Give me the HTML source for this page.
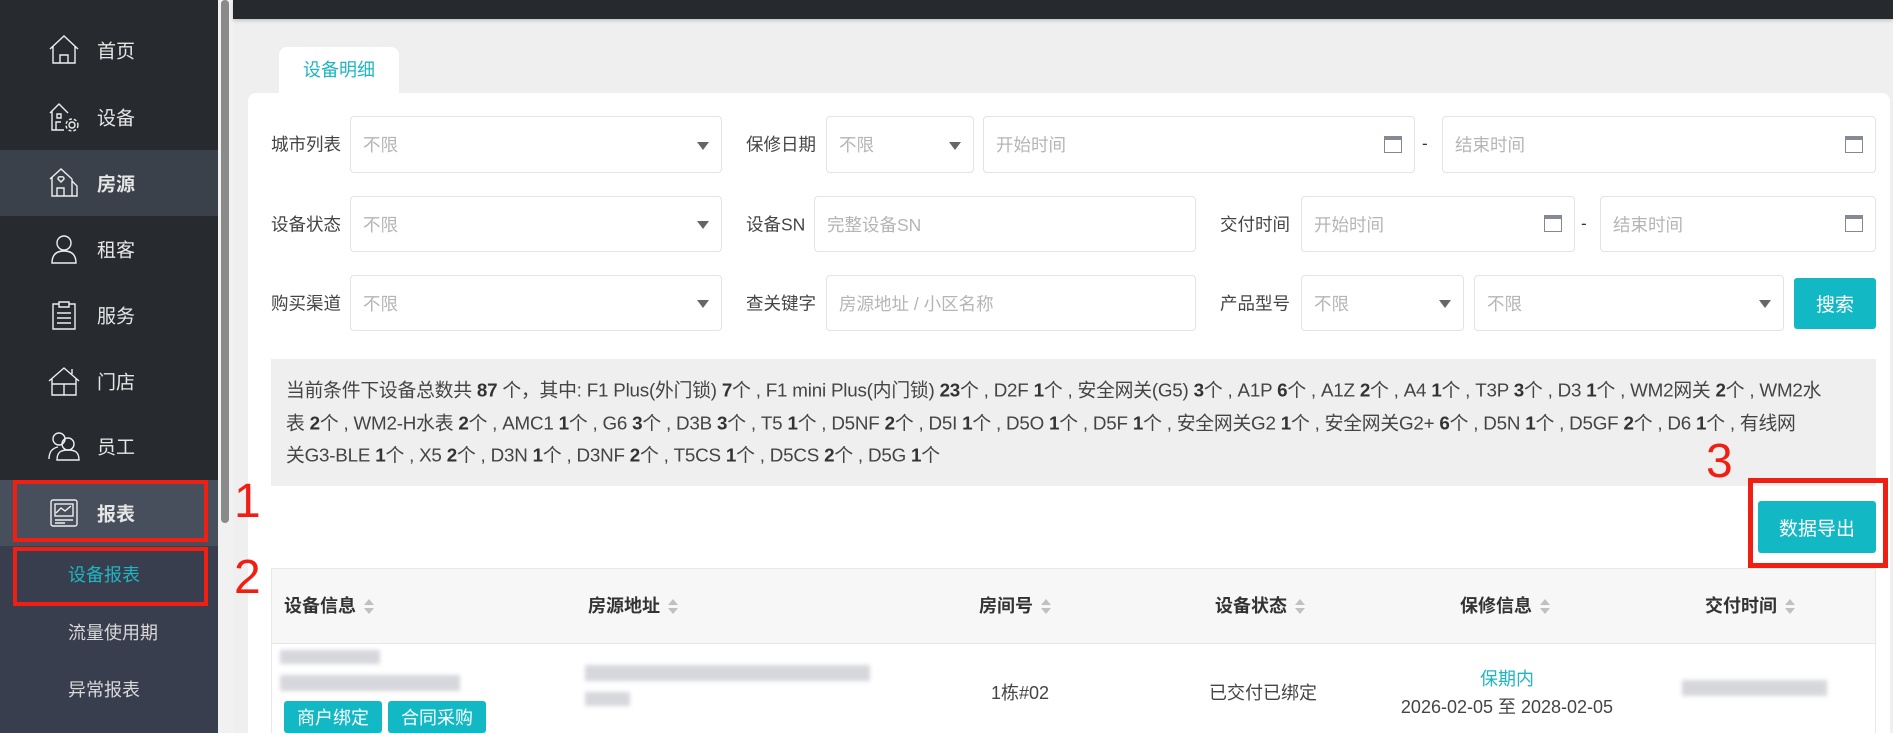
<!DOCTYPE html>
<html><head><meta charset="utf-8">
<style>
*{margin:0;padding:0;box-sizing:border-box}
body{width:1893px;height:733px;overflow:hidden;background:#efeff0;font-family:"Liberation Sans","Noto Sans CJK SC",sans-serif;position:relative;color:#333}
.abs{position:absolute}
#side{left:0;top:0;width:218px;height:733px;background:#272b30}
.item{position:absolute;left:0;width:218px;height:66px;color:#e6e6e6;font-size:19px}
.item svg{position:absolute;left:48px;top:17px}
.item span{position:absolute;left:97px;top:50%;transform:translateY(-50%)}
.sub{position:absolute;left:68px;font-size:18px;color:#d8d8d8;transform:translateY(-50%)}
.lbl{position:absolute;font-size:17.5px;color:#444;transform:translateY(-50%)}
.inp{position:absolute;background:#fff;border:1px solid #e3e3e3;border-radius:4px;font-size:17.5px;color:#b5b5b5;padding-left:12px;display:flex;align-items:center}
.tri{position:absolute;right:12px;top:50%;margin-top:-3px;border-left:6px solid transparent;border-right:6px solid transparent;border-top:8px solid #666}
.cal{position:absolute;right:12px;top:50%;margin-top:-9px;width:18px;height:17px;border:1.5px solid #888;border-top:4px solid #858a94}
.btn{position:absolute;background:#12b9c4;color:#fff;border-radius:3px;display:flex;align-items:center;justify-content:center}
.red{position:absolute;border:4px solid #f01f14;z-index:5}
.num{position:absolute;z-index:6;color:#f01f14;font-size:48px;line-height:48px;font-weight:300}
.th{position:absolute;top:605px;font-size:18px;font-weight:bold;color:#333;transform:translateY(-50%);white-space:nowrap}
.th i{display:inline-block;width:10px;vertical-align:middle;margin-left:8px;position:relative;height:16px}
.th i:before{content:"";position:absolute;left:0;top:0;border-left:5px solid transparent;border-right:5px solid transparent;border-bottom:6px solid #c0c0c0}
.th i:after{content:"";position:absolute;left:0;top:9px;border-left:5px solid transparent;border-right:5px solid transparent;border-top:6px solid #c0c0c0}
.sum{position:absolute;left:286px;font-size:18.8px;color:#444;white-space:nowrap;letter-spacing:-0.2px;transform:translateY(-50%)}
.sum b{color:#333}
.blur{position:absolute;background:#d6d7dc;filter:blur(2px)}
</style></head><body>
<div id="side" class="abs">
 <div class="abs" style="left:0;top:150px;width:218px;height:66px;background:#3b414a"></div>
 <div class="abs" style="left:0;top:480px;width:218px;height:66px;background:#474e5c"></div>
 <div class="abs" style="left:0;top:546px;width:218px;height:187px;background:#383e4e"></div>
 <div class="item" style="top:17px"><svg width="32" height="32" viewBox="0 0 32 32" fill="none" stroke="#eee" stroke-width="1.4"><path d="M2 15L16 2l14 13M5 12v17h22V12M12 29v-8h8v8"/></svg><span>首页</span></div>
 <div class="item" style="top:84px"><svg width="32" height="32" viewBox="0 0 32 32" fill="none" stroke="#eee" stroke-width="1.4"><path d="M2 12L11 3l9 9M4 10v19h12M8 29v-8h5M9 13h4v4H9z"/><circle cx="24" cy="24" r="3"/><circle cx="24" cy="24" r="6" stroke-dasharray="3 2"/></svg><span>设备</span></div>
 <div class="item" style="top:150px"><svg width="32" height="32" viewBox="0 0 32 32" fill="none" stroke="#eee" stroke-width="1.4"><path d="M2 12L13 2l11 10M4 10v19h20V12M9 29v-8h7v8M24 14l5 5v10h-5M13 15l-3-3a2 2 0 013-2 2 2 0 013 2z"/></svg><span style="font-weight:bold">房源</span></div>
 <div class="item" style="top:216px"><svg width="32" height="32" viewBox="0 0 32 32" fill="none" stroke="#eee" stroke-width="1.4"><circle cx="16" cy="10" r="7"/><path d="M4 30c0-9 5-12 12-12s12 3 12 12z"/></svg><span>租客</span></div>
 <div class="item" style="top:282px"><svg width="32" height="32" viewBox="0 0 32 32" fill="none" stroke="#eee" stroke-width="1.4"><path d="M11 5H5v25h22V5h-6M11 3h10v5H11zM9 14h14M9 19h14M9 24h14"/></svg><span>服务</span></div>
 <div class="item" style="top:348px"><svg width="32" height="32" viewBox="0 0 32 32" fill="none" stroke="#eee" stroke-width="1.4"><path d="M1 16L16 3l15 13M4 14v16h24V14M4 19h24M16 19v11M24 4v5"/></svg><span>门店</span></div>
 <div class="item" style="top:413px"><svg width="32" height="32" viewBox="0 0 32 32" fill="none" stroke="#eee" stroke-width="1.4"><circle cx="11" cy="9" r="6"/><circle cx="20" cy="14" r="6"/><path d="M1 29c0-8 4-11 9-12M9 30c0-8 4-10 11-10s11 2 11 10z"/></svg><span>员工</span></div>
 <div class="item" style="top:480px"><svg width="32" height="32" viewBox="0 0 32 32" fill="none" stroke="#eee" stroke-width="1.4"><rect x="3" y="3" width="26" height="26" rx="2"/><rect x="7" y="7" width="18" height="12"/><path d="M8 16l5-5 4 3 6-5M7 23h18M7 26h10"/></svg><span style="font-weight:bold">报表</span></div>
 <div class="sub" style="top:574px;color:#1fb5c1">设备报表</div>
 <div class="sub" style="top:632px">流量使用期</div>
 <div class="sub" style="top:689px">异常报表</div>
</div>
<div class="abs" style="left:218px;top:0;width:15px;height:733px;background:#f1f1f1"></div>
<div class="abs" style="left:221px;top:0;width:8px;height:523px;background:#8a8a8a;border-radius:4px"></div>
<div class="abs" style="left:233px;top:0;width:1660px;height:19px;background:#262a2e;box-shadow:0 2px 3px #c8c8c8"></div>

<div class="abs" style="left:279px;top:47px;width:120px;height:50px;background:#fff;border-radius:8px 8px 0 0;color:#1fb5c1;font-size:18px;text-align:center;line-height:46px">设备明细</div>
<div class="abs" style="left:248px;top:93px;width:1642px;height:640px;background:#fff;border-radius:8px 8px 0 0"></div>

<div class="red" style="left:13px;top:480px;width:195px;height:62px"></div>
<div class="red" style="left:13px;top:547px;width:195px;height:59px"></div>
<div class="num" style="left:234px;top:478px">1</div>
<div class="num" style="left:234px;top:554px">2</div>

<div class="lbl" style="left:271px;top:144px">城市列表</div>
<div class="inp" style="left:350px;top:116px;width:372px;height:57px">不限<i class="tri"></i></div>
<div class="lbl" style="left:746px;top:144px">保修日期</div>
<div class="inp" style="left:826px;top:116px;width:148px;height:57px">不限<i class="tri"></i></div>
<div class="inp" style="left:983px;top:116px;width:432px;height:57px">开始时间<i class="cal"></i></div>
<div class="abs" style="left:1422px;top:134px;font-size:17px">-</div>
<div class="inp" style="left:1442px;top:116px;width:434px;height:57px">结束时间<i class="cal"></i></div>

<div class="lbl" style="left:271px;top:224px">设备状态</div>
<div class="inp" style="left:350px;top:196px;width:372px;height:56px">不限<i class="tri"></i></div>
<div class="lbl" style="left:746px;top:224px">设备SN</div>
<div class="inp" style="left:814px;top:196px;width:382px;height:56px">完整设备SN</div>
<div class="lbl" style="left:1220px;top:224px">交付时间</div>
<div class="inp" style="left:1301px;top:196px;width:274px;height:56px">开始时间<i class="cal"></i></div>
<div class="abs" style="left:1581px;top:214px;font-size:17px">-</div>
<div class="inp" style="left:1600px;top:196px;width:276px;height:56px">结束时间<i class="cal"></i></div>

<div class="lbl" style="left:271px;top:303px">购买渠道</div>
<div class="inp" style="left:350px;top:275px;width:372px;height:56px">不限<i class="tri"></i></div>
<div class="lbl" style="left:746px;top:303px">查关键字</div>
<div class="inp" style="left:826px;top:275px;width:370px;height:56px">房源地址 / 小区名称</div>
<div class="lbl" style="left:1220px;top:303px">产品型号</div>
<div class="inp" style="left:1301px;top:275px;width:163px;height:56px">不限<i class="tri"></i></div>
<div class="inp" style="left:1474px;top:275px;width:310px;height:56px">不限<i class="tri"></i></div>
<div class="btn" style="left:1794px;top:278px;width:82px;height:51px;font-size:19px">搜索</div>

<div class="abs" style="left:271px;top:359px;width:1605px;height:127px;background:#efefef"></div>
<div class="sum" style="top:389px">当前条件下设备总数共 <b>87</b> 个，其中: F1 Plus(外门锁) <b>7</b>个 , F1 mini Plus(内门锁) <b>23</b>个 , D2F <b>1</b>个 , 安全网关(G5) <b>3</b>个 , A1P <b>6</b>个 , A1Z <b>2</b>个 , A4 <b>1</b>个 , T3P <b>3</b>个 , D3 <b>1</b>个 , WM2网关 <b>2</b>个 , WM2水</div>
<div class="sum" style="top:422px">表 <b>2</b>个 , WM2-H水表 <b>2</b>个 , AMC1 <b>1</b>个 , G6 <b>3</b>个 , D3B <b>3</b>个 , T5 <b>1</b>个 , D5NF <b>2</b>个 , D5I <b>1</b>个 , D5O <b>1</b>个 , D5F <b>1</b>个 , 安全网关G2 <b>1</b>个 , 安全网关G2+ <b>6</b>个 , D5N <b>1</b>个 , D5GF <b>2</b>个 , D6 <b>1</b>个 , 有线网</div>
<div class="sum" style="top:454px">关G3-BLE <b>1</b>个 , X5 <b>2</b>个 , D3N <b>1</b>个 , D3NF <b>2</b>个 , T5CS <b>1</b>个 , D5CS <b>2</b>个 , D5G <b>1</b>个</div>

<div class="num" style="left:1706px;top:438px">3</div>
<div class="red" style="left:1748px;top:478px;width:140px;height:90px;border-width:5px"></div>
<div class="btn" style="left:1758px;top:501px;width:118px;height:52px;font-size:19px">数据导出</div>

<div class="abs" style="left:271px;top:568px;width:1605px;height:165px;border:1px solid #e8e8e8;border-bottom:none"></div>
<div class="abs" style="left:272px;top:569px;width:1603px;height:75px;background:#f7f7f7;border-bottom:1px solid #e6e6e6"></div>
<div class="th" style="left:284px">设备信息<i></i></div>
<div class="th" style="left:588px">房源地址<i></i></div>
<div class="th" style="left:979px">房间号<i></i></div>
<div class="th" style="left:1215px">设备状态<i></i></div>
<div class="th" style="left:1460px">保修信息<i></i></div>
<div class="th" style="left:1705px">交付时间<i></i></div>

<div class="blur" style="left:280px;top:650px;width:100px;height:14px"></div>
<div class="blur" style="left:280px;top:675px;width:180px;height:16px"></div>
<div class="blur" style="left:585px;top:665px;width:285px;height:16px"></div>
<div class="blur" style="left:585px;top:692px;width:45px;height:14px"></div>
<div class="blur" style="left:1682px;top:680px;width:145px;height:16px"></div>
<div class="btn" style="left:284px;top:701px;width:98px;height:32px;font-size:18px">商户绑定</div>
<div class="btn" style="left:388px;top:701px;width:98px;height:32px;font-size:18px">合同采购</div>
<div class="abs" style="left:960px;top:679px;width:120px;text-align:center;font-size:18px;color:#444">1栋#02</div>
<div class="abs" style="left:1183px;top:679px;width:160px;text-align:center;font-size:18px;color:#444">已交付已绑定</div>
<div class="abs" style="left:1407px;top:665px;width:200px;text-align:center;font-size:18px;color:#1fb5c1">保期内</div>
<div class="abs" style="left:1387px;top:693px;width:240px;text-align:center;font-size:18px;color:#444">2026-02-05 至 2028-02-05</div>
</body></html>
